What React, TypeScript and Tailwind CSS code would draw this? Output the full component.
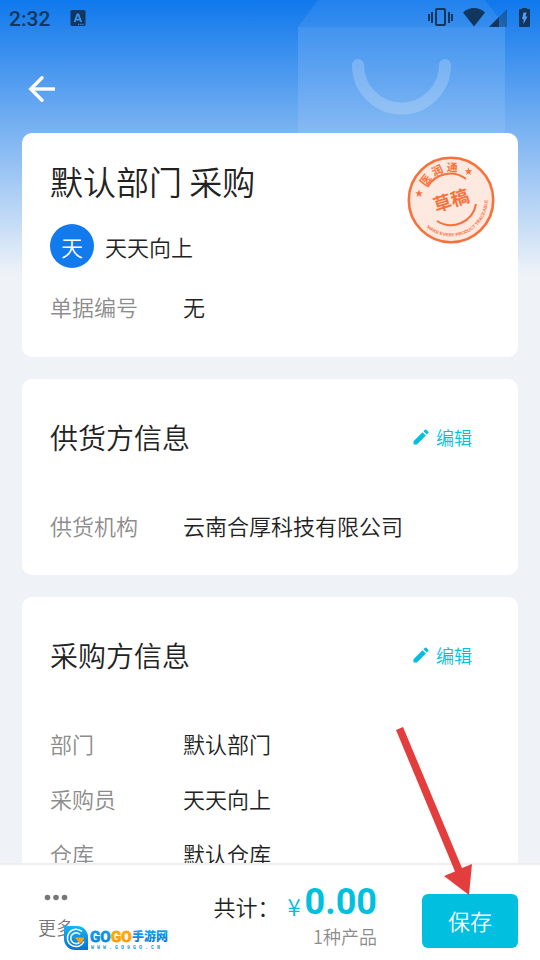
import React from 'react';

interface Field {
    label: string;
    value: string;
}

interface InfoSection {
    id: string;
    title: string;
    fields: Field[];
}

const SECTIONS: InfoSection[] = [
    {
        id: 'supplier',
        title: '供货方信息',
        fields: [{ label: '供货机构', value: '云南合厚科技有限公司' }],
    },
    {
        id: 'buyer',
        title: '采购方信息',
        fields: [
            { label: '部门', value: '默认部门' },
            { label: '采购员', value: '天天向上' },
            { label: '仓库', value: '默认仓库' },
        ],
    },
];

const StatusBar = () => (
    <div className="flex h-9 items-center justify-between pl-[9px] pr-2.5 text-[#12375f]">
        <div className="flex items-center gap-5">
            <span className="pt-px font-[Roboto] text-[21px] leading-9 font-medium">2:32</span>
            <svg className="h-4 w-4" viewBox="0 0 16 16" aria-hidden="true">
                <rect x="0.5" y="0" width="15" height="16" rx="1.5" fill="currentColor" />
                <path d="M4.600 12 7.400 4.500h1L11.200 12M5.800 9.600h4.200" fill="none" stroke="#3a8fee" strokeWidth="1.8" />
                <path d="M8 14.4h1.2M10.2 14.4h1.2M12.4 14.4h1.2" stroke="#3a8fee" strokeWidth="1.1" />
            </svg>
        </div>
        <div className="flex items-center">
            {/* Vibrate */}
            <svg className="mr-2.5 h-5 w-[25px]" viewBox="0 0 25 20" fill="currentColor" aria-hidden="true">
                <path d="M0 6h2v7H0zM3 4h2v11H3zM20 4h2v11h-2zM23 6h2v7h-2z" />
                <rect x="8" y="1" width="9" height="16" rx="1" fill="none" stroke="currentColor" strokeWidth="2" />
            </svg>
            {/* Wifi */}
            <svg className="mr-1 h-5 w-[22px]" viewBox="0 0 22 20" fill="currentColor" aria-hidden="true">
                <path d="M11 18.5 0 4.500C3 1.700 7 0 11 0s8 1.700 11 4.500z" />
            </svg>
            {/* Signal */}
            <svg className="mr-3 h-5 w-[18px]" viewBox="0 0 18 20" fill="currentColor" aria-hidden="true">
                <path d="M0 19 18 1v18z" opacity="0.45" />
                <path d="M0 19 10 9v10z" />
            </svg>
            {/* Battery */}
            <svg className="h-5 w-[11px]" viewBox="0 0 11 20" aria-hidden="true">
                <path
                    d="M3 0h5v1h2a1 1 0 0 1 1 1v16a1 1 0 0 1-1 1H1a1 1 0 0 1-1-1V2a1 1 0 0 1 1-1h2z"
                    fill="currentColor"
                />
                <path d="M4.500 4.500h3L6.500 8.500h2L4.500 16v-5H3z" fill="#559eef" />
            </svg>
        </div>
    </div>
);

const BagBackdrop = () => (
    <svg className="absolute top-0 right-[35px] h-[150px] w-[207px]" viewBox="0 0 207 150" fill="none" aria-hidden="true">
        <defs>
            <linearGradient id="bag" x1="0" y1="0" x2="0" y2="1">
                <stop offset="0" stopColor="#fff" stopOpacity="0.13" />
                <stop offset="1" stopColor="#fff" stopOpacity="0.08" />
            </linearGradient>
        </defs>
        <path d="M20 0h167l20 27H0z" fill="#fff" fillOpacity="0.08" />
        <path d="M0 27h207v123H0z" fill="url(#bag)" />
        <path d="M60 65a43.5 43.5 0 0 0 87 0" stroke="#fff" strokeOpacity="0.2" strokeWidth="12" strokeLinecap="round" />
    </svg>
);

const DraftStamp = () => (
    <svg className="absolute top-[23px] right-[23px] h-[88px] w-[88px]" viewBox="-44 -44 88 88" role="img" aria-label="草稿">
        <defs>
            <path id="stamp-top" d="M-28.500 0A28.500 28.500 0 0 1 28.500 0" transform="rotate(-25)" />
            <path id="stamp-bottom" d="M-36.500 0A36.500 36.500 0 0 0 36.500 0" transform="rotate(-24)" />
        </defs>
        <circle r="42.2" fill="#fee9e1" stroke="#f8713a" strokeWidth="2.6" />
        <g fill="none" stroke="#f8713a" strokeWidth="2">
            <path d="M-23.500-13A26 26 0 0 1 15-21" />
            <path d="M-14 21A25.5 25.5 0 0 0 25 4" />
        </g>
        <g fill="#f8713a">
            <path d="m-32-10.500 1 2.700 2.900.1-2.300 1.800.8 2.800-2.400-1.600-2.400 1.600.8-2.800-2.300-1.800 2.900-.1z" />
            <path d="m17.500-32.500 1 2.700 2.900.1-2.300 1.800.8 2.800-2.400-1.600-2.400 1.600.8-2.800-2.300-1.800 2.900-.1z" />
            <g className="font-['Noto_Sans_CJK_SC',sans-serif] font-bold" textAnchor="middle">
                <text fontSize="11">
                    <textPath href="#stamp-top" startOffset="50%">医 润 通</textPath>
                </text>
                <text fontSize="18" y="7" transform="rotate(-18)">草稿</text>
            </g>
            <text className="font-['Liberation_Sans',sans-serif] font-bold" fontSize="4.6" textAnchor="middle">
                <textPath href="#stamp-bottom" startOffset="50%">MAKE EVERY PRODUCT TRACEABLE</textPath>
            </text>
        </g>
    </svg>
);

const FieldRow = ({ label, value }: Field) => (
    <div className="flex text-[22px] leading-8">
        <dt className="w-[133px] shrink-0 text-[#8c8c8c]">{label}</dt>
        <dd className="text-[#222]">{value}</dd>
    </div>
);

const SectionCard = ({ section }: { section: InfoSection }) => (
    <section className="rounded-[10px] bg-white px-7 pt-[38px] pb-[34px]">
        <div className="flex items-center justify-between pr-[18px]">
            <h2 className="text-[28px] leading-10">{section.title}</h2>
            <button type="button" className="flex items-center gap-1.5 text-lg text-[#00bfdf]">
                <svg className="h-[18px] w-[18px]" viewBox="0 0 24 24" fill="currentColor" aria-hidden="true">
                    <path d="M2 17.500V22h4.500L18.500 10 14 5.500zM21.700 6.800a1.400 1.400 0 0 0 0-1.900l-2.600-2.600a1.400 1.400 0 0 0-1.900 0L15.300 4.200l4.500 4.500z" />
                </svg>
                <span>编辑</span>
            </button>
        </div>
        <dl className="mt-[52px] flex flex-col gap-[23px]">
            {section.fields.map((field) => (
                <FieldRow key={field.label} {...field} />
            ))}
        </dl>
    </section>
);

const SiteBadge = () => (
    <svg className="absolute bottom-2 left-16 h-[26px] w-[104px]" viewBox="0 0 104 26" aria-hidden="true">
        <defs>
            <linearGradient id="badge-blue" x1="0" y1="0" x2="0" y2="1">
                <stop offset="0" stopColor="#18b4f2" />
                <stop offset="1" stopColor="#0673cf" />
            </linearGradient>
            <linearGradient id="badge-orange" x1="0" y1="0" x2="0" y2="1">
                <stop offset="0" stopColor="#ffc400" />
                <stop offset="1" stopColor="#ff8a00" />
            </linearGradient>
        </defs>
        <path d="M0 0h13a11 11 0 0 1 11 11v13H11A11 11 0 0 1 0 13z" fill="url(#badge-blue)" />
        <path d="M18 5.500A8.700 8.700 0 1 0 20 15.500" fill="none" stroke="#fff" strokeWidth="1.500" />
        <path d="M16 8.500A5.400 5.400 0 1 0 16.500 15.500" fill="none" stroke="#d8f3ff" strokeWidth="1.700" />
        <path d="M10.500 11.500H20a7 7 0 0 1-4 6z" fill="#f99f1b" />
        <g className="font-['Liberation_Sans_Narrow',Roboto,sans-serif] font-bold" fontSize="15">
            <text x="26" y="16" fill="url(#badge-blue)" stroke="#0a8fdf" strokeWidth="0.8">GO</text>
            <text x="47" y="16" fill="url(#badge-orange)" stroke="#ff9d00" strokeWidth="0.8">GO</text>
        </g>
        <text className="font-['Noto_Sans_CJK_SC',sans-serif] font-black" x="68" y="15" fontSize="12" fill="url(#badge-blue)">
            手游网
        </text>
        <text className="font-['Liberation_Mono',monospace] font-bold" x="27" y="23" fontSize="5" letterSpacing="3" fill="#1a95e0">
            WWW.GO9GO.CN
        </text>
    </svg>
);

const BottomBar = () => (
    <footer className="relative flex h-[97px] shrink-0 items-center justify-between border-t-2 border-[#eee] bg-white pr-[22px] pl-[38px]">
        <button type="button" className="flex flex-col items-center gap-3 pt-2.5 text-lg leading-7 text-[#777]">
            <svg className="h-[7px] w-6" viewBox="0 0 24 7" fill="currentColor" aria-hidden="true">
                <circle cx="3.500" cy="3.500" r="2.800" />
                <circle cx="12" cy="3.500" r="2.800" />
                <circle cx="20.500" cy="3.500" r="2.800" />
            </svg>
            <span>更多</span>
        </button>
        <SiteBadge />

        <div className="flex items-center">
            <div className="mr-[45px] flex flex-col items-end pt-1.5">
                <div className="flex items-end leading-10">
                    <span className="pt-2 text-[22px] leading-8">共计：</span>
                    <span className="mr-1 ml-2 text-2xl leading-8 text-[#00bfdf]">¥</span>
                    <span className="self-start font-[Roboto] text-4xl leading-10 font-bold text-[#00bfdf]">0.00</span>
                </div>
                <span className="text-lg leading-7 text-[#8c8c8c]">1种产品</span>
            </div>
            <div className="relative mt-4">
                <button type="button" className="h-[54px] w-24 rounded-md bg-[#00bfdf] text-[22px] text-white">
                    保存
                </button>
                {/* Pointer towards the save button */}
                <svg
                    className="pointer-events-none absolute right-[45px] bottom-[53px] h-[168px] w-[77px]"
                    viewBox="0 0 77 168"
                    aria-hidden="true"
                >
                    <path d="M0 3 7 0 66 141 76 137 73 168 48 149 59 144.500z" fill="#e43d3d" />
                </svg>
            </div>
        </div>
    </footer>
);

export default function App() {
    return (
        <div className="relative flex h-screen flex-col overflow-hidden bg-[#eff3f8] font-['Noto_Sans_CJK_SC',sans-serif] font-[350] text-[#222]">
            <div className="absolute inset-x-0 top-0 h-[275px] bg-linear-to-b/srgb from-[#0f78ec] to-[#eff3f8]">
                <BagBackdrop />
            </div>

            <header className="relative shrink-0">
                <StatusBar />
                <div className="flex h-[97px] items-center px-7 pt-2">
                    <button type="button" aria-label="返回" className="text-white">
                        <svg className="h-7 w-7" viewBox="0 0 28 28" fill="none" stroke="currentColor" strokeWidth="3.400" aria-hidden="true">
                            <path d="M14 2.800 2.800 14 14 25.200" strokeLinecap="round" />
                            <path d="M3 14h24" />
                        </svg>
                    </button>
                </div>
            </header>

            <main className="relative flex min-h-0 flex-1 flex-col gap-[22px] overflow-y-auto px-[22px] [scrollbar-width:none]">
                <section className="relative rounded-[10px] bg-white px-7 pt-7 pb-[35px]">
                    <h1 className="text-[33px] leading-10">默认部门 采购</h1>
                    <DraftStamp />
                    <div className="mt-[23px] flex items-center gap-[11px] text-[22px]">
                        <span className="flex size-11 items-center justify-center rounded-full bg-[#117aed] text-white">
                            天
                        </span>
                        <span>天天向上</span>
                    </div>
                    <dl className="mt-[22px]">
                        <FieldRow label="单据编号" value="无" />
                    </dl>
                </section>

                {SECTIONS.map((section) => (
                    <SectionCard key={section.id} section={section} />
                ))}
            </main>

            <BottomBar />
        </div>
    );
}
